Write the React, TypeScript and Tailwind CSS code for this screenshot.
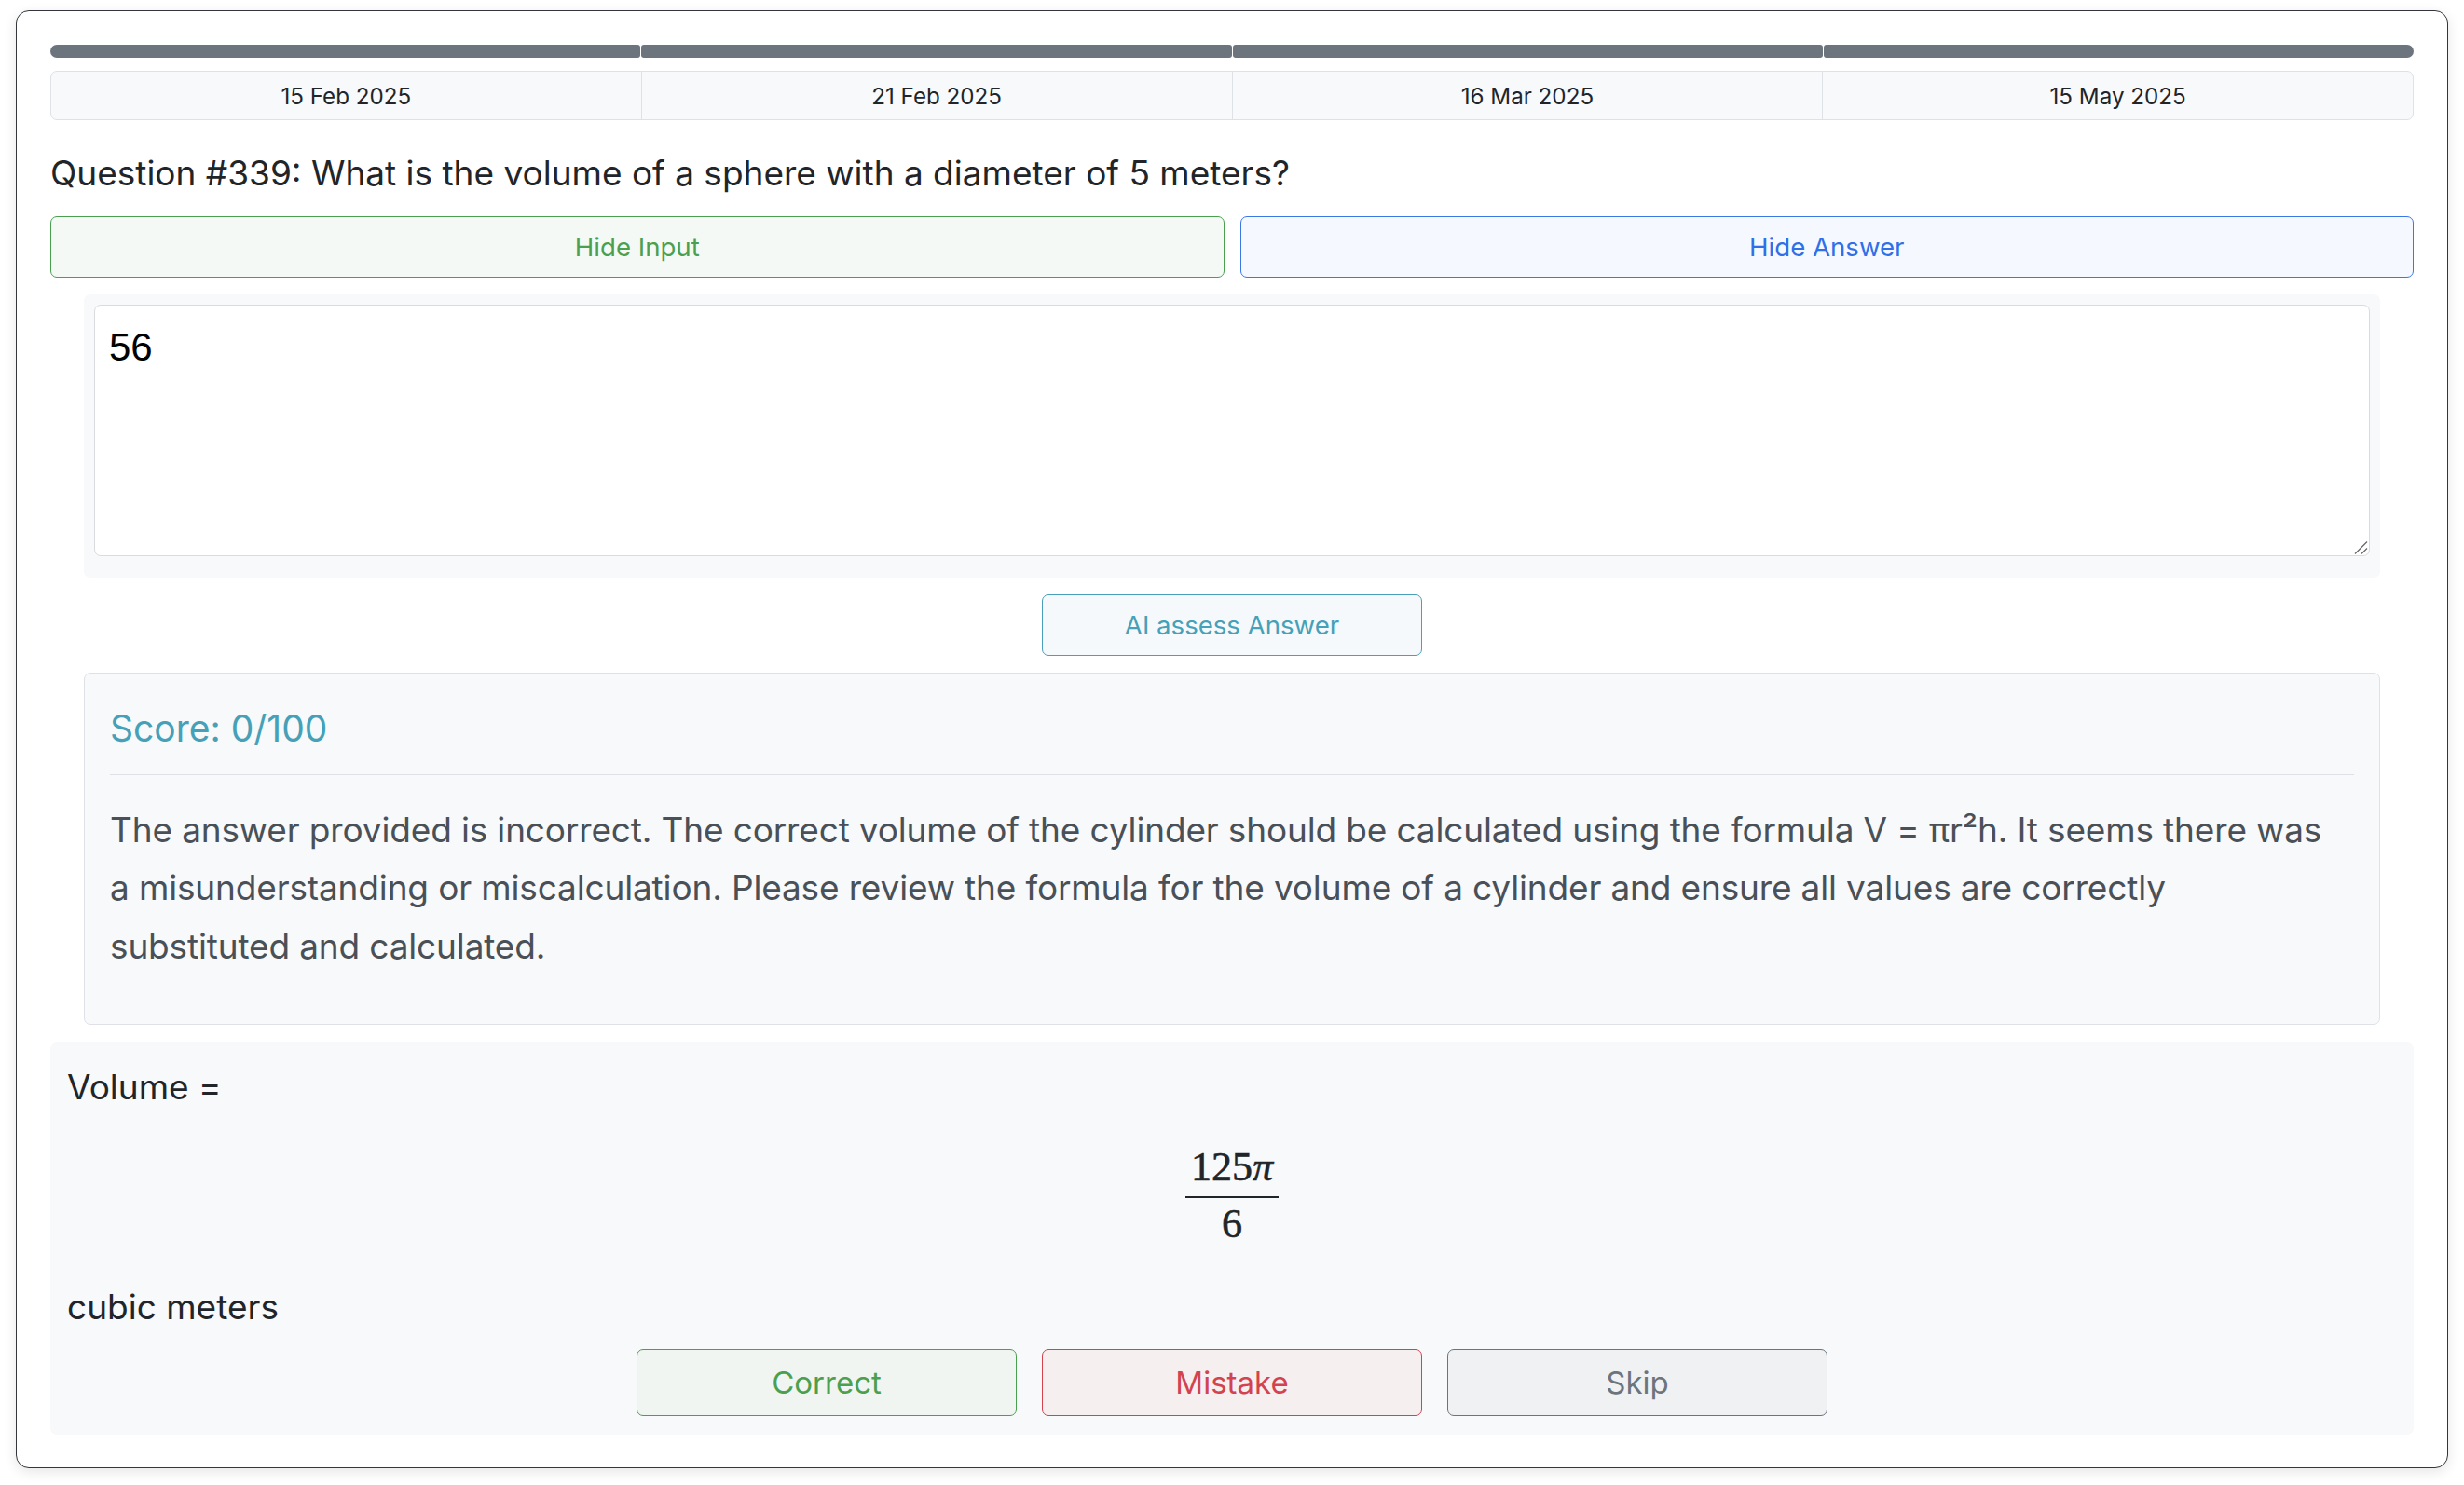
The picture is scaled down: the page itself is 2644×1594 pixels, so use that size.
import React from "react";

const dates = ["15 Feb 2025", "21 Feb 2025", "16 Mar 2025", "15 May 2025"];
const sans = "font-['Inter','Liberation_Sans',sans-serif]";

export default function App() {
  return (
    <div className={`min-h-[1594px] bg-white pl-[17px] pt-[11px] text-[#212529] ${sans}`}>
      <div className="box-border h-[1565px] w-[2610px] rounded-[14px] border border-[#33363a] bg-white px-[36px] pt-[36px] shadow-[0_4px_14px_rgba(0,0,0,0.1)]">
        <div className="flex h-[14px] gap-[1px] overflow-hidden rounded-[7px]">
          {dates.map((d) => (
            <div key={d} className="h-full flex-1 rounded-[3px] bg-[#6c757d]" />
          ))}
        </div>
        <div className="mt-[14px] flex h-[53px] rounded-[7px] border border-[#dee2e6] bg-[#f8f9fa]">
          {dates.map((d, i) => (
            <div key={d} className={`flex flex-1 items-center justify-center pt-[4px] text-[24.2px] ${i < 3 ? "border-r border-[#dee2e6]" : ""}`}>
              {d}
            </div>
          ))}
        </div>
        <h5 className="mb-[16px] mt-[27px] flex h-[60px] items-center text-[37px] font-normal text-[#212529]">
          Question #339: What is the volume of a sphere with a diameter of 5 meters?
        </h5>
        <div className="flex gap-[17px]">
          <button className="h-[66px] flex-1 rounded-[7px] border border-[#4ba04f] bg-[#f5f9f6] pt-[2px] text-[27.6px] text-[#4ba04f]">Hide Input</button>
          <button className="h-[66px] flex-1 rounded-[7px] border border-[#3b78e7] bg-[#f5f8fe] pt-[2px] text-[27.6px] text-[#2f6fe8]">Hide Answer</button>
        </div>
        <div className="mx-[36px] mt-[18px] h-[304px] rounded-[7px] bg-[#f8f9fa] px-[11px] pt-[11px]">
          <div className="relative h-[270px]">
            <textarea
              defaultValue="56"
              className="block h-[270px] w-full resize-none rounded-[7px] border border-[#d9dbde] bg-white px-[15px] pb-[8px] pt-[13px] font-['Liberation_Sans',sans-serif] text-[42px] leading-[1.5] text-black"
            />
            <svg className="pointer-events-none absolute bottom-[2px] right-[2px]" width="15" height="15" viewBox="0 0 15 15" fill="none" stroke="#666" strokeWidth="1.2">
              <path d="M1 14.5 L14 1.5" />
              <path d="M8 14.5 L14 8.5" />
            </svg>
          </div>
        </div>
        <div className="mt-[18px] flex justify-center">
          <button className="h-[66px] w-[408px] rounded-[7px] border border-[#4a9fba] bg-[#f5f9fb] pt-[2px] text-[27.6px] text-[#46a0b8]">AI assess Answer</button>
        </div>
        <div className="mx-[36px] mt-[18px] h-[378px] rounded-[7px] border border-[#dee2e6] bg-[#f8f9fa] px-[27px] pt-[34px]">
          <h4 className="flex h-[50px] items-center text-[39px] font-normal text-[#46a0b8]">Score: 0/100</h4>
          <div className="mt-[24px] h-[1px] bg-[#dee2e6]" />
          <p className="mt-[28px] pr-[14px] text-[37px] leading-[62.4px] tracking-[-0.15px] text-[#495057]">
            The answer provided is incorrect. The correct volume of the cylinder should be calculated using the formula V = πr²h. It seems there was a misunderstanding or miscalculation. Please review the formula for the volume of a cylinder and ensure all values are correctly substituted and calculated.
          </p>
        </div>
        <div className="mt-[19px] h-[421px] rounded-[7px] bg-[#f8f9fa] px-[18px] pt-[24px]">
          <div className="flex h-[48px] items-center text-[37px]">Volume =</div>
          <div className="mt-[40px] flex flex-col items-center font-['Liberation_Serif',serif] text-[44px] leading-[44px] [-webkit-text-stroke:0.6px_#212529]">
            <div className="w-[100px] border-b-2 border-[#212529] pb-[9px] text-center">
              125<i>π</i>
            </div>
            <div className="pt-[6px]">6</div>
          </div>
          <div className="mt-[43px] flex h-[48px] items-center text-[37px]">cubic meters</div>
          <div className="mt-[21px] flex justify-center gap-[27px]">
            <button className="h-[72px] w-[408px] rounded-[7px] border border-[#4ba04f] bg-[#f0f5f1] pt-[2px] text-[33px] text-[#4ba04f]">Correct</button>
            <button className="h-[72px] w-[408px] rounded-[7px] border border-[#d2434f] bg-[#f6eff0] pt-[2px] text-[33px] text-[#d2434f]">Mistake</button>
            <button className="h-[72px] w-[408px] rounded-[7px] border border-[#6c757d] bg-[#f0f1f3] pt-[2px] text-[33px] text-[#6c757d]">Skip</button>
          </div>
        </div>
      </div>
    </div>
  );
}
